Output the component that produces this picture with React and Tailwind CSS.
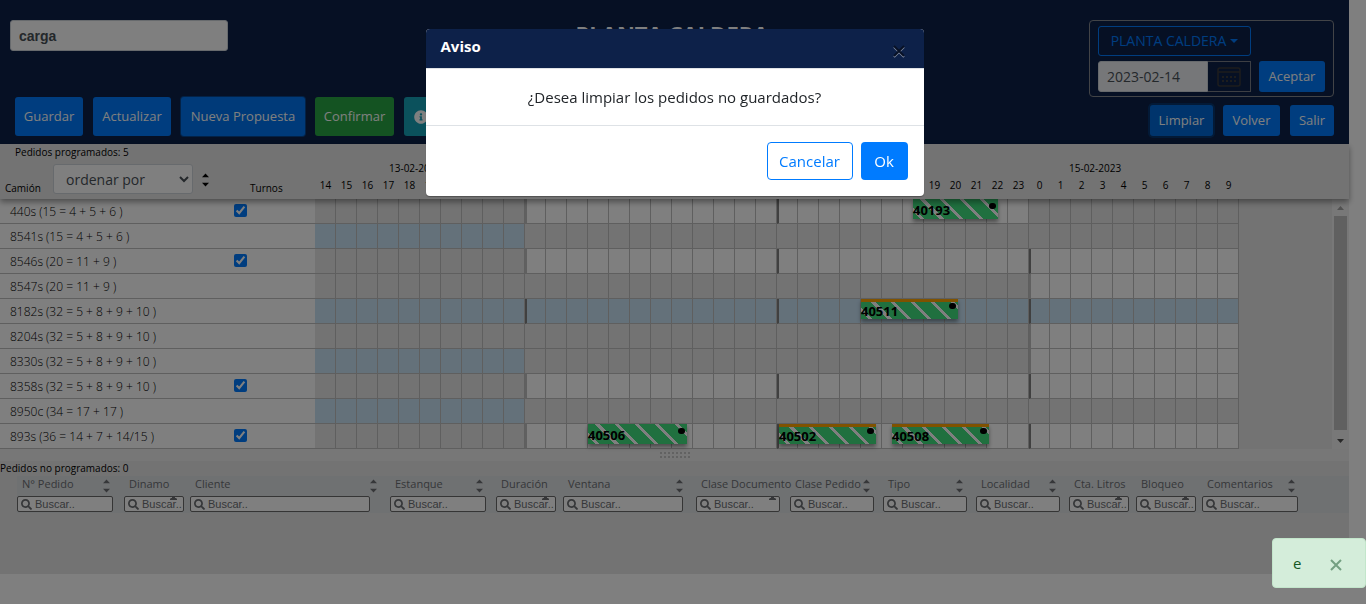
import React from "react";
import { FaSearch, FaInfoCircle } from "react-icons/fa";

const HOURS = [
  ...Array.from({ length: 10 }, (_, i) => i + 14),
  ...Array.from({ length: 24 }, (_, i) => i),
  ...Array.from({ length: 10 }, (_, i) => i),
];

// zones: background of the 13th, 14th and 15th (g = closed, w = open, b = holiday)
const TRUCKS = [
  { name: "440s (15 = 4 + 5 + 6 )", turn: true, zones: "gwg", orders: [{ id: "40193", col: 28, offset: 10, width: 85 }] },
  { name: "8541s (15 = 4 + 5 + 6 )", zones: "bgg" },
  { name: "8546s (20 = 11 + 9 )", turn: true, zones: "gww" },
  { name: "8547s (20 = 11 + 9 )", zones: "ggw" },
  { name: "8182s (32 = 5 + 8 + 9 + 10 )", zones: "bbb", orders: [{ id: "40511", col: 26, offset: 0, width: 97, late: true }] },
  { name: "8204s (32 = 5 + 8 + 9 + 10 )", zones: "ggw" },
  { name: "8330s (32 = 5 + 8 + 9 + 10 )", zones: "bgw" },
  { name: "8358s (32 = 5 + 8 + 9 + 10 )", turn: true, zones: "gww" },
  { name: "8950c (34 = 17 + 17 )", zones: "bgg" },
  {
    name: "893s (36 = 14 + 7 + 14/15 )",
    turn: true,
    zones: "gww",
    orders: [
      { id: "40506", col: 13, offset: 0, width: 99 },
      { id: "40502", col: 22, offset: 0, width: 97, late: true },
      { id: "40508", col: 27, offset: 10, width: 97, late: true },
    ],
  },
];

const ZONE_BG = { g: "bg-[#e6e6e6]", w: "bg-white", b: "bg-[#c8e2f5]" };

const COLUMNS = [
  { label: "N° Pedido", col: "w-[107px]", input: "w-[96px]", sort: "left-[86px]" },
  { label: "Dinamo", col: "w-[66px]", input: "w-[60px]", sort: "left-[46px]", wrapped: true },
  { label: "Cliente", col: "w-[200px]", input: "w-[180px]", sort: "left-[180px]" },
  { label: "Estanque", col: "w-[106px]", input: "w-[96px]", sort: "left-[86px]" },
  { label: "Duración", col: "w-[67px]", input: "w-[60px]", sort: "left-[46px]", wrapped: true },
  { label: "Ventana", col: "w-[133px]", input: "w-[120px]", sort: "left-[113px]" },
  { label: "Clase Documento", col: "w-[94px]", input: "w-[84px]", sort: "left-[73px]", wrapped: true },
  { label: "Clase Pedido", col: "w-[93px]", input: "w-[84px]", sort: "left-[73px]" },
  { label: "Tipo", col: "w-[93px]", input: "w-[84px]", sort: "left-[73px]" },
  { label: "Localidad", col: "w-[93px]", input: "w-[84px]", sort: "left-[73px]" },
  { label: "Cta. Litros", col: "w-[67px]", input: "w-[60px]", sort: "left-[46px]", wrapped: true },
  { label: "Bloqueo", col: "w-[66px]", input: "w-[60px]", sort: "left-[46px]", wrapped: true },
  { label: "Comentarios", col: "", input: "w-[96px]", sort: "left-[86px]" },
];

function SortIcon({ className = "" }) {
  return (
    <svg viewBox="0 0 7 14" width="7" height="14" fill="currentColor" aria-hidden="true" className={className}>
      <path d="M0 4.200 3.500 0.600 7 4.200zM0 9.800h7L3.500 13.400z" />
    </svg>
  );
}

function Cross({ shadow = "none" }) {
  return (
    <svg viewBox="0 0 12 13" width="12" height="13" fill="none" strokeWidth="2" aria-hidden="true">
      <path d="M1 2l10 10M11 2 1 12" stroke={shadow} />
      <path d="M1 1l10 10M11 1 1 11" stroke="currentColor" />
    </svg>
  );
}

function CalendarIcon() {
  return (
    <svg viewBox="0 0 24 20" width="24" height="20" fill="none" stroke="#3a3a3a" aria-hidden="true">
      <rect x="1" y="1" width="22" height="18" rx="2" strokeWidth="1.500" />
      <path d="M1 5h22" strokeWidth="1.500" />
      <path d="M5 10h2M9 10h2M13 10h2M17 10h2M5 14h2M9 14h2M13 14h2M17 14h2" strokeWidth="2" />
    </svg>
  );
}

function Button({ className = "", children, ...rest }) {
  return (
    <button type="button" className={`flex items-center justify-center whitespace-nowrap rounded-[3px] ${className}`} {...rest}>
      {children}
    </button>
  );
}

function Order({ order }) {
  return (
    <div
      className={`absolute top-0 z-[1] flex h-5 items-center bg-[repeating-linear-gradient(45deg,#41e07f_0px,#41e07f_5px,#fff_5px,#fff_8px,#41e07f_8px,#41e07f_14px)] shadow-[0_3px_4px_rgba(0,0,0,0.4)] ${
        order.late ? "border-t-[3px] border-[#ffa500]" : "pt-[2px]"
      }`}
      style={{ left: order.offset, width: order.width }}
    >
      <span className="text-[13px] leading-4 font-bold text-black">{order.id}</span>
      <span className={`absolute right-[2px] h-[6px] w-[7px] rounded-full bg-black ${order.late ? "top-px" : "top-1"}`} />
    </div>
  );
}

function markerFor(zones, i) {
  if (i !== 10 && i !== 22 && i !== 34) return "";
  const here = i < 34 ? zones[1] : zones[2];
  const before = i === 10 ? zones[0] : zones[1];
  if (here === "g") return "";
  return before === "g" ? "border-l-2 border-l-[#c0c0c0]" : "border-l-2 border-l-[#808080]";
}

function TruckRow({ truck }) {
  return (
    <tr className="h-[25px]">
      <th scope="row" className="border-b border-[#bfbfbf] bg-white p-0 pt-[2px] pl-[10px] text-left text-xs leading-4 font-light whitespace-nowrap">
        {truck.name}
      </th>
      <td className="border-b border-[#bfbfbf] bg-white p-0 pb-px pl-[9px]">
        {truck.turn && <input type="checkbox" defaultChecked aria-label={`Turno ${truck.name}`} className="block h-[13px] w-[13px] accent-[#007bff]" />}
      </td>
      {HOURS.map((_, i) => {
        const zone = truck.zones[i < 10 ? 0 : i < 34 ? 1 : 2];
        const order = truck.orders?.find((o) => o.col === i);
        return (
          <td key={i} className={`border-r border-b border-[#bfbfbf] p-0 ${ZONE_BG[zone]} ${markerFor(truck.zones, i)}`}>
            <div className="relative h-6">{order && <Order order={order} />}</div>
          </td>
        );
      })}
      <td />
    </tr>
  );
}

function TopBar() {
  return (
    <header className="grid grid-cols-[1fr_auto_1fr] bg-[#0c2148] pt-5 pr-[15px] pb-2 pl-[10px] text-[13px] text-white">
      <div className="flex flex-col justify-between">
        <input
          aria-label="Nombre de la propuesta"
          defaultValue="carga"
          className="h-[31px] w-[218px] rounded-[3px] border border-[#ced4da] bg-white px-2 font-['Liberation_Sans',sans-serif] text-[14px] font-bold text-[#495057]"
        />
        <div className="flex gap-[10px] pl-[5px]">
          <Button className="h-[39px] w-[68px] bg-[#007bff]">Guardar</Button>
          <Button className="h-[39px] w-[78px] bg-[#007bff]">Actualizar</Button>
          <Button className="h-[39px] w-[124px] bg-[#0075f2] ring-1 ring-[#07458f]">Nueva Propuesta</Button>
          <Button className="h-[39px] w-[79px] bg-[#28a745]">Confirmar</Button>
          <Button className="h-[39px] w-[34px] bg-[#17a2b8]" aria-label="Información">
            <FaInfoCircle size={14} />
          </Button>
        </div>
      </div>
      <h1 className="text-[22px] leading-[26px] font-bold">PLANTA CALDERA</h1>
      <div className="flex flex-col items-end gap-2">
        <div className="flex flex-col items-start gap-[5px] rounded border border-[#85888f] px-2 pt-[5px] pb-1">
          <Button className="h-[30px] w-[153px] gap-1 border border-[#007bff] text-sm text-[#007bff]">
            PLANTA CALDERA
            <svg viewBox="0 0 8 4" width="8" height="4" fill="currentColor" aria-hidden="true">
              <path d="M0 0h8L4 4z" />
            </svg>
          </Button>
          <div className="flex">
            <input aria-label="Fecha" defaultValue="2023-02-14" className="h-[31px] w-[110px] rounded-l-[3px] border border-[#ced4da] bg-[#eceef2] px-2 text-sm text-[#495057]" />
            <button type="button" aria-label="Abrir calendario" className="mr-2 flex h-[31px] w-[43px] items-center justify-center border border-l-0 border-[#7b7f88]">
              <CalendarIcon />
            </button>
            <Button className="h-[31px] w-[66px] bg-[#007bff]">Aceptar</Button>
          </div>
        </div>
        <div className="flex gap-[10px]">
          <Button className="h-[31px] w-[63px] bg-[#0069d9] ring-2 ring-[#06356f]">Limpiar</Button>
          <Button className="h-[31px] w-[57px] bg-[#007bff]">Volver</Button>
          <Button className="h-[31px] w-[44px] bg-[#007bff]">Salir</Button>
        </div>
      </div>
    </header>
  );
}

function ScheduleHeader() {
  return (
    <div className="relative z-10 flex bg-[#e6e6e6] text-[10px] leading-4 text-black shadow-[0_3px_6px_rgba(0,0,0,0.4)]">
      <div className="w-[315px] shrink-0">
        <p className="pl-[15px]">Pedidos programados: 5</p>
        <div className="flex h-[39px] items-start pt-1">
          <span className="w-[53px] self-end pb-[3px] pl-[5px]">Camión</span>
          <select aria-label="Ordenar por" className="h-[30px] w-[140px] rounded-[3px] border border-[#ced4da] bg-white pl-2 text-sm text-[#495057]">
            <option>ordenar por</option>
          </select>
          <SortIcon className="mt-[9px] mr-2 ml-[9px]" />
          <span className="self-end pb-[3px] pl-[33px]">Turnos</span>
        </div>
      </div>
      <div className="pt-4">
        <div className="flex">
          <span className="w-[210px] pl-[74px]">13-02-2023</span>
          <span className="w-[504px] pl-[40px]">14-02-2023</span>
          <span className="w-[210px] pl-[40px]">15-02-2023</span>
        </div>
        <div className="flex pt-px">
          {HOURS.map((h, i) => (
            <span key={i} className="w-[21px] text-center">
              {h}
            </span>
          ))}
        </div>
      </div>
    </div>
  );
}

function Schedule() {
  return (
    <div className="flex bg-[#e6e6e6]">
      <table className="w-full table-fixed border-separate border-spacing-0">
        <colgroup>
          <col className="w-[225px]" />
          <col className="w-[90px]" />
          {HOURS.map((_, i) => (
            <col key={i} className="w-[21px]" />
          ))}
          <col />
        </colgroup>
        <tbody>
          {TRUCKS.map((t) => (
            <TruckRow key={t.name} truck={t} />
          ))}
        </tbody>
      </table>
      <div className="flex w-[17px] shrink-0 flex-col items-center bg-[#f1f1f1]">
        <svg viewBox="0 0 17 17" width="17" height="17" fill="#a3a3a3" aria-hidden="true">
          <path d="M5 11h7L8.500 7z" />
        </svg>
        <div className="w-[13px] flex-1 bg-[#c1c1c1]" />
        <svg viewBox="0 0 17 19" width="17" height="19" fill="#505050" aria-hidden="true">
          <path d="M5 9h7l-3.500 4z" />
        </svg>
      </div>
    </div>
  );
}

function PendingOrders() {
  return (
    <section className="bg-[#e6e6e6] pb-[61px]">
      <p className="text-[10px] leading-[15px] text-black">Pedidos no programados: 0</p>
      <div className="pl-[17px]">
        <table className="w-full table-fixed border-separate border-spacing-0 bg-[#dfe2e5] text-[#6c6f73]">
          <thead>
            <tr>
              {COLUMNS.map((c) => (
                <th key={c.label} scope="col" className={`p-0 text-left align-top ${c.col}`}>
                  <div className="relative pb-px">
                    <span className="block pl-[5px] text-[11px] leading-4 font-medium whitespace-nowrap">{c.label}</span>
                    <label className={`mt-1 flex h-4 items-center gap-[3px] rounded-[2px] border border-[#6a6a6a] bg-white pl-[3px] ${c.input}`}>
                      <FaSearch size={11} className="shrink-0" />
                      <input
                        aria-label={`Buscar ${c.label}`}
                        placeholder="Buscar.."
                        className="w-full min-w-0 bg-transparent font-['Liberation_Sans',sans-serif] text-[11px] leading-[14px] font-normal placeholder:text-[#6c6f73]"
                      />
                    </label>
                    {c.wrapped ? (
                      <svg viewBox="0 0 7 4" width="7" height="4" fill="currentColor" aria-hidden="true" className={`absolute top-5 ${c.sort}`}>
                        <path d="M1 0h5v1h-1v1h1l1 1v1H0V3l1-1h1V1H1z" />
                      </svg>
                    ) : (
                      <SortIcon className={`absolute top-[3px] ${c.sort}`} />
                    )}
                  </div>
                </th>
              ))}
            </tr>
          </thead>
        </table>
      </div>
    </section>
  );
}

function Dialog() {
  return (
    <div className="fixed inset-0 z-20 flex items-start justify-center bg-black/50 pt-[29px] pr-[17px]">
      <div role="dialog" aria-modal="true" aria-labelledby="dialog-title" className="w-[498px] overflow-hidden rounded bg-white shadow-[0_1px_1px_rgba(0,0,0,0.3)]">
        <div className="flex justify-between border-b border-[#dee2e6] bg-[#0d2149] pt-[7px] pr-[19px] pb-2 pl-[15px]">
          <h2 id="dialog-title" className="text-[15px] leading-5 font-bold text-white">
            Aviso
          </h2>
          <button type="button" aria-label="Cerrar" className="flex h-6 w-3 items-end pb-[2px] text-[#071125]">
            <Cross shadow="#868fa3" />
          </button>
        </div>
        <p className="border-b border-[#dee2e6] py-4 text-center text-[15px] leading-6 text-[#212529]">¿Desea limpiar los pedidos no guardados?</p>
        <div className="flex justify-end gap-2 p-4">
          <button type="button" className="h-[38px] w-[86px] rounded border border-[#007bff] text-[15px] text-[#007bff]">
            Cancelar
          </button>
          <button type="button" className="h-[38px] w-[47px] rounded bg-[#007bff] text-[15px] text-white">
            Ok
          </button>
        </div>
      </div>
    </div>
  );
}

function Toast() {
  return (
    <div role="alert" className="fixed right-0 bottom-4 z-30 flex h-[50px] w-[94px] items-center justify-between rounded border border-[#c3e6cb] bg-[#d4edda] pr-[23px] pl-5 text-[15px] text-[#155724]">
      <span>e</span>
      <button type="button" aria-label="Cerrar aviso" className="pt-1 text-[#74a082]">
        <Cross />
      </button>
    </div>
  );
}

export default function App() {
  return (
    <div className="min-h-screen bg-white font-['Open_Sans','Noto_Sans',sans-serif]">
      <div className="mr-[17px]">
        <TopBar />
        <main>
          <ScheduleHeader />
          <Schedule />
          <div className="flex h-3 items-center justify-center bg-[#eeeeee]">
            <div className="grid grid-cols-8 gap-[2px]" role="separator">
              {Array.from({ length: 16 }, (_, i) => (
                <span key={i} className="h-[2px] w-[2px] bg-[#c4c4c4]" />
              ))}
            </div>
          </div>
          <PendingOrders />
        </main>
      </div>
      <Dialog />
      <Toast />
    </div>
  );
}
